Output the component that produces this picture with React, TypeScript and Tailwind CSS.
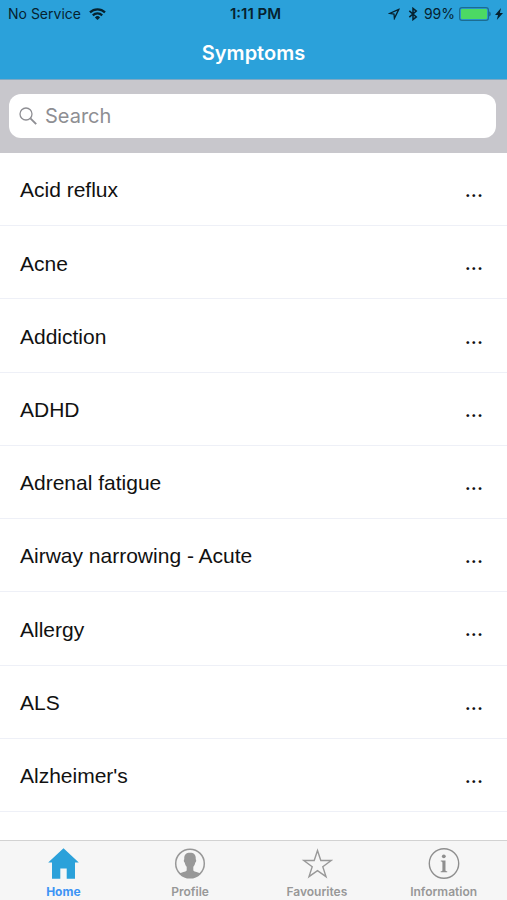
import type { ReactNode } from "react";

const symptoms = [
  "Acid reflux",
  "Acne",
  "Addiction",
  "ADHD",
  "Adrenal fatigue",
  "Airway narrowing - Acute",
  "Allergy",
  "ALS",
  "Alzheimer's",
];

function WifiIcon() {
  return (
    <svg className="h-3 w-[17px]" viewBox="0 0 17 12" fill="none" stroke="currentColor" strokeWidth="2.2" aria-hidden="true">
      <path d="M1 4.4a10.6 10.6 0 0 1 15 0" />
      <path d="M3.8 7.4a6.7 6.7 0 0 1 9.4 0" />
      <path d="M8.5 12 5.9 9.4a3.7 3.7 0 0 1 5.2 0Z" fill="currentColor" stroke="none" />
    </svg>
  );
}

function LocationIcon() {
  return (
    <svg className="h-3 w-3" viewBox="0 0 12 12" fill="none" stroke="currentColor" strokeWidth="1.3" strokeLinejoin="miter" aria-hidden="true">
      <path d="M10.8 1.4 1.6 5.4l4.4.6.4 4.4Z" />
    </svg>
  );
}

function BluetoothIcon() {
  return (
    <svg className="h-[14px] w-[10px]" viewBox="0 0 10 14" fill="none" stroke="currentColor" strokeWidth="1.5" aria-hidden="true">
      <path d="m1.3 3.9 7 6L5 12.6V1.4l3.3 2.7-7 6" />
    </svg>
  );
}

function BatteryIcon() {
  return (
    <svg className="h-[14px] w-8" viewBox="0 0 32 14" aria-hidden="true">
      <rect x="0.6" y="0.6" width="28.8" height="12.8" rx="2.4" fill="none" stroke="#1c6c91" strokeWidth="1.2" />
      <rect x="2" y="2" width="26" height="10" rx="1" fill="#4cd964" />
      <path d="M30.4 4.6c1.6.6 1.6 4.2 0 4.8Z" fill="#14526f" />
    </svg>
  );
}

function BoltIcon() {
  return (
    <svg className="h-3 w-2" viewBox="0 0 8 12" fill="currentColor" aria-hidden="true">
      <path d="M6 0 0 7h3L1.800 12 8 5H4.900Z" />
    </svg>
  );
}

function HomeIcon() {
  return (
    <svg className="h-8 w-8" viewBox="0 0 32 32" fill="#2ba1da" aria-hidden="true">
      <path d="M16.500.3 31.800 14.500H28v16.200h-8.300V20.500h-6.400v10.200H5V14.500H1.200Z" />
    </svg>
  );
}

function ProfileIcon() {
  return (
    <svg className="h-8 w-8" viewBox="0 0 32 32" aria-hidden="true">
      <circle cx="16" cy="15.500" r="14.300" fill="none" stroke="#989898" strokeWidth="1.500" />
      <path
        d="M16 4.700c-4.400 0-6.100 2.500-5.700 6.600-.8.200-.6 2.800.5 3.400.3 1.700.9 3 1.900 4v3.700c-1.200 1.500-5 1.800-7.300 3a14.300 14.300 0 0 0 21.200 0c-2.300-1.200-6.100-1.500-7.300-3v-3.700c1-1 1.600-2.300 1.900-4 1.100-.6 1.300-3.200.5-3.400.4-4.100-1.300-6.600-5.700-6.600Z"
        fill="#989898"
      />
    </svg>
  );
}

function StarIcon() {
  return (
    <svg className="h-8 w-8" viewBox="0 0 32 32" fill="none" stroke="#999" strokeWidth="1.400" aria-hidden="true">
      <path d="m16.500 2.500 3.300 10h10.400l-8.400 6.200 3.200 9.900-8.500-6-8.500 6 3.200-9.900L2.800 12.500h10.400Z" />
    </svg>
  );
}

function InfoIcon() {
  return (
    <svg className="h-8 w-8" viewBox="0 0 32 32" fill="#8f8f8f" aria-hidden="true">
      <circle cx="16" cy="15.500" r="14.700" fill="none" stroke="#8f8f8f" strokeWidth="1.400" />
      <circle cx="15.800" cy="8.300" r="1.900" />
      <path d="M12.800 12.500h4.700v9.800c0 .7.500.9 1.700 1v.9h-6.500v-.9c1.200-.1 1.700-.3 1.700-1v-7.600c0-.8-.4-1.100-1.600-1.200Z" />
    </svg>
  );
}

function Tab({ label, icon, active = false }: { label: string; icon: ReactNode; active?: boolean }) {
  return (
    <a
      href={"#" + label.toLowerCase()}
      aria-current={active ? "page" : undefined}
      className={
        "flex flex-col items-center gap-1 pt-[7px] text-xs leading-4 " +
        (active ? "font-bold text-[#3d94f5]" : "font-semibold text-[#989898]")
      }
    >
      {icon}
      {label}
    </a>
  );
}

export default function App() {
  return (
    <div className="flex min-h-screen flex-col bg-white font-['Inter','Liberation_Sans',sans-serif] text-black">
      <header className="h-20 border-b border-[#7fa9c4] bg-[#2ba1da]">
        <div className="grid h-7 grid-cols-[1fr_auto_1fr] items-center pr-1 pl-2 text-sm text-[#06222f]">
          <div className="flex items-center gap-2">
            <span>No Service</span>
            <WifiIcon />
          </div>
          <span className="text-[15px] font-semibold">1:11 PM</span>
          <div className="flex items-center justify-end">
            <LocationIcon />
            <span className="ml-2">
              <BluetoothIcon />
            </span>
            <span className="mr-1 ml-1.5">99%</span>
            <BatteryIcon />
            <span className="ml-1">
              <BoltIcon />
            </span>
          </div>
        </div>
        <h1 className="pt-[9px] text-center text-xl leading-8 font-semibold text-white">Symptoms</h1>
      </header>

      <div className="bg-[#c8c7cc] pt-[14px] pr-[11px] pb-[15px] pl-[9px]">
        <label className="flex h-11 items-center gap-2 rounded-xl bg-white px-[10px]">
          <svg className="h-[18px] w-[18px] shrink-0" viewBox="0 0 18 18" fill="none" stroke="#8e8e93" aria-hidden="true">
            <circle cx="7" cy="7" r="6" strokeWidth="1.300" />
            <path d="m11.400 11.400 5.800 5.800" strokeWidth="1.900" />
          </svg>
          <input
            type="search"
            aria-label="Search"
            placeholder="Search"
            className="min-w-0 flex-1 bg-transparent text-xl outline-none placeholder:text-[#8e8e93]"
          />
        </label>
      </div>

      <ul className="flex flex-1 flex-col pb-7 font-['Liberation_Sans',Arial,sans-serif] text-[21px] text-[#111]">
        {symptoms.map((name) => (
          <li key={name} className="flex min-h-[73px] flex-1 items-center justify-between border-b border-[#eef0f7] pt-0.5 pr-6 pl-5">
            <span>{name}</span>
            <button
              type="button"
              aria-label={"More about " + name}
              className="font-['Inter','Liberation_Sans',sans-serif] text-xl font-medium"
            >
              ...
            </button>
          </li>
        ))}
      </ul>

      <nav className="grid h-[60px] grid-cols-4 border-t border-[#d2d2d2] bg-[#f6f6f6]">
        <Tab label="Home" icon={<HomeIcon />} active />
        <Tab label="Profile" icon={<ProfileIcon />} />
        <Tab label="Favourites" icon={<StarIcon />} />
        <Tab label="Information" icon={<InfoIcon />} />
      </nav>
    </div>
  );
}
